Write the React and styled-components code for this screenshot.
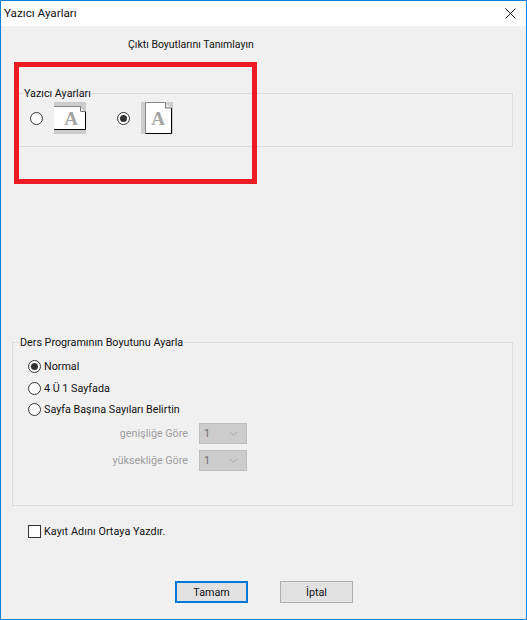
import React from 'react';
import styled, { createGlobalStyle } from 'styled-components';

const Global = createGlobalStyle`
  html, body { margin: 0; padding: 0; background: #f0f0f0; }
  * { box-sizing: border-box; }
`;

const Win = styled.div`
  position: relative;
  width: 527px;
  height: 620px;
  border: 1px solid #0f80d8;
  background: #f0f0f0;
  color: #111;
  font-family: Roboto, "Noto Sans", sans-serif;
  font-size: 10.75px;
  display: flex;
  flex-direction: column;
  overflow: hidden;
`;

const TitleBar = styled.header`
  height: 25px;
  flex: none;
  background: #fff;
  display: flex;
  align-items: center;
  justify-content: space-between;
  padding: 0 10px 1px 3px;
  font-size: 11.7px;
`;

const Body = styled.main`
  flex: 1;
  display: flex;
  flex-direction: column;
  padding: 11px 13px 0 11px;
`;

const Heading = styled.h1`
  margin: 0 0 0 116px;
  font-size: 10.5px;
  font-weight: 400;
  line-height: 16px;
`;

const Group = styled.fieldset`
  margin: ${p => p.$top}px 0 0 ${p => p.$left}px;
  padding: 0;
  height: ${p => p.$height}px;
  border: 1px solid #dcdcdc;
  min-width: 0;
`;

const Legend = styled.legend`
  margin-left: ${p => p.$inset}px;
  padding: 2px 1px 0;
  font-size: 10.75px;
  line-height: 14px;
`;

const OrientationRow = styled.div`
  display: flex;
  margin: 1px 0 0 13px;
  gap: 31px;
`;

const Orientation = styled.div`
  display: flex;
  align-items: center;
  gap: 11px;
`;

const RadioDot = styled.span`
  width: 13px;
  height: 13px;
  flex: none;
  border-radius: 50%;
  border: 1px solid #333;
  background: #fff;
  display: flex;
  align-items: center;
  justify-content: center;
  &::after {
    content: "";
    width: 7px;
    height: 7px;
    border-radius: 50%;
    background: ${p => (p.$on ? '#333' : 'transparent')};
  }
`;

const Options = styled.div`
  display: flex;
  flex-direction: column;
  margin: 6px 0 0 15px;
`;

const Option = styled.div`
  display: flex;
  align-items: center;
  height: ${p => p.$h}px;
  gap: 3px;
`;

const SelectRow = styled.div`
  display: flex;
  justify-content: flex-end;
  align-items: center;
  gap: 11px;
  width: 218px;
  margin: ${p => p.$top}px 0 0 1px;
  height: 21px;
  color: #9d9d9d;
`;

const SelectBox = styled.div`
  width: 48px;
  height: 21px;
  flex: none;
  background: #cccccc;
  border: 1px solid #bdbdbd;
  color: #6d6d6d;
  display: flex;
  align-items: center;
  justify-content: space-between;
  padding: 0 8px 0 4px;
`;

const CheckRow = styled.div`
  display: flex;
  align-items: center;
  gap: 3px;
  margin: 18px 0 0 16px;
  height: 14px;
  letter-spacing: 0.08px;
`;

const CheckBox = styled.span`
  width: 13px;
  height: 13px;
  flex: none;
  background: #fff;
  border: 1px solid #333;
`;

const Actions = styled.div`
  display: flex;
  gap: 32px;
  margin: 43px 0 0 163px;
`;

const Button = styled.button`
  width: 73px;
  height: 22px;
  padding: 1px 0 0;
  background: #e1e1e1;
  border: ${p => (p.$primary ? '2px solid #0078d7' : '1px solid #adadad')};
  font: inherit;
  color: #111;
`;

const Annotation = styled.div`
  position: absolute;
  left: 13px;
  top: 61px;
  width: 243px;
  height: 122px;
  border: 5px solid #ed1c24;
  pointer-events: none;
`;

const CloseIcon = () => (
  <svg width="11" height="11" viewBox="0 0 11 11">
    <path d="M.5.5l10 10M10.500.5l-10 10" stroke="#111" strokeWidth="1" fill="none" />
  </svg>
);

const Chevron = () => (
  <svg width="9" height="5" viewBox="0 0 9 5">
    <path d="M.5.5l4 4 4-4" stroke="#aaa" strokeWidth="1" fill="none" />
  </svg>
);

const PageIcon = ({ landscape }) => (
  <svg width="32" height="32" viewBox="0 0 32 32">
    <rect width="32" height="32" fill="#cccccc" />
    {landscape ? (
      <>
        <path d="M0 4.500H26l5.500 5.500V27.500H0z" fill="#fff" />
        <path d="M0 27.500H31.500V9.500" stroke="#000" fill="none" />
        <path d="M0 4.500H26.500L31 9" stroke="#888" fill="none" />
        <path d="M26.500 4.500V9.500H31.500" stroke="#777" fill="#eee" />
        <text x="17" y="23" textAnchor="middle" fontFamily="Liberation Serif" fontWeight="700" fontSize="19" fill="#a3a3a3">A</text>
      </>
    ) : (
      <>
        <path d="M4.500 0H24.500L30.500 6V31.500H4.500z" fill="#fff" />
        <path d="M30.500 6V31.500H4.500" stroke="#000" fill="none" />
        <path d="M4.500 31V.5H24.500L30 6" stroke="#888" fill="none" />
        <path d="M24.500 .5V6H30.500" stroke="#777" fill="#eee" />
        <text x="17" y="23" textAnchor="middle" fontFamily="Liberation Serif" fontWeight="700" fontSize="19" fill="#a3a3a3">A</text>
      </>
    )}
  </svg>
);

export default function App() {
  return (
    <Win>
      <Global />
      <TitleBar>
        <span>Yazıcı Ayarları</span>
        <CloseIcon />
      </TitleBar>
      <Body>
        <Heading>Çıktı Boyutlarını Tanımlayın</Heading>
        <Group $top={32} $left={4} $height={62}>
          <Legend $inset={6}>Yazıcı Ayarları</Legend>
          <OrientationRow>
            <Orientation>
              <RadioDot />
              <PageIcon landscape />
            </Orientation>
            <Orientation>
              <RadioDot $on />
              <PageIcon />
            </Orientation>
          </OrientationRow>
        </Group>
        <Group $top={187} $left={0} $height={172}>
          <Legend $inset={6}>Ders Programının Boyutunu Ayarla</Legend>
          <Options>
            <Option $h={21}><RadioDot $on />Normal</Option>
            <Option $h={22}><RadioDot />4 Ü 1 Sayfada</Option>
            <Option $h={21}><RadioDot />Sayfa Başına Sayıları Belirtin</Option>
            <SelectRow $top={3}>genişliğe Göre<SelectBox>1<Chevron /></SelectBox></SelectRow>
            <SelectRow $top={6}>yüksekliğe Göre<SelectBox>1<Chevron /></SelectBox></SelectRow>
          </Options>
        </Group>
        <CheckRow><CheckBox />Kayıt Adını Ortaya Yazdır.</CheckRow>
        <Actions>
          <Button $primary>Tamam</Button>
          <Button>İptal</Button>
        </Actions>
      </Body>
      <Annotation />
    </Win>
  );
}
